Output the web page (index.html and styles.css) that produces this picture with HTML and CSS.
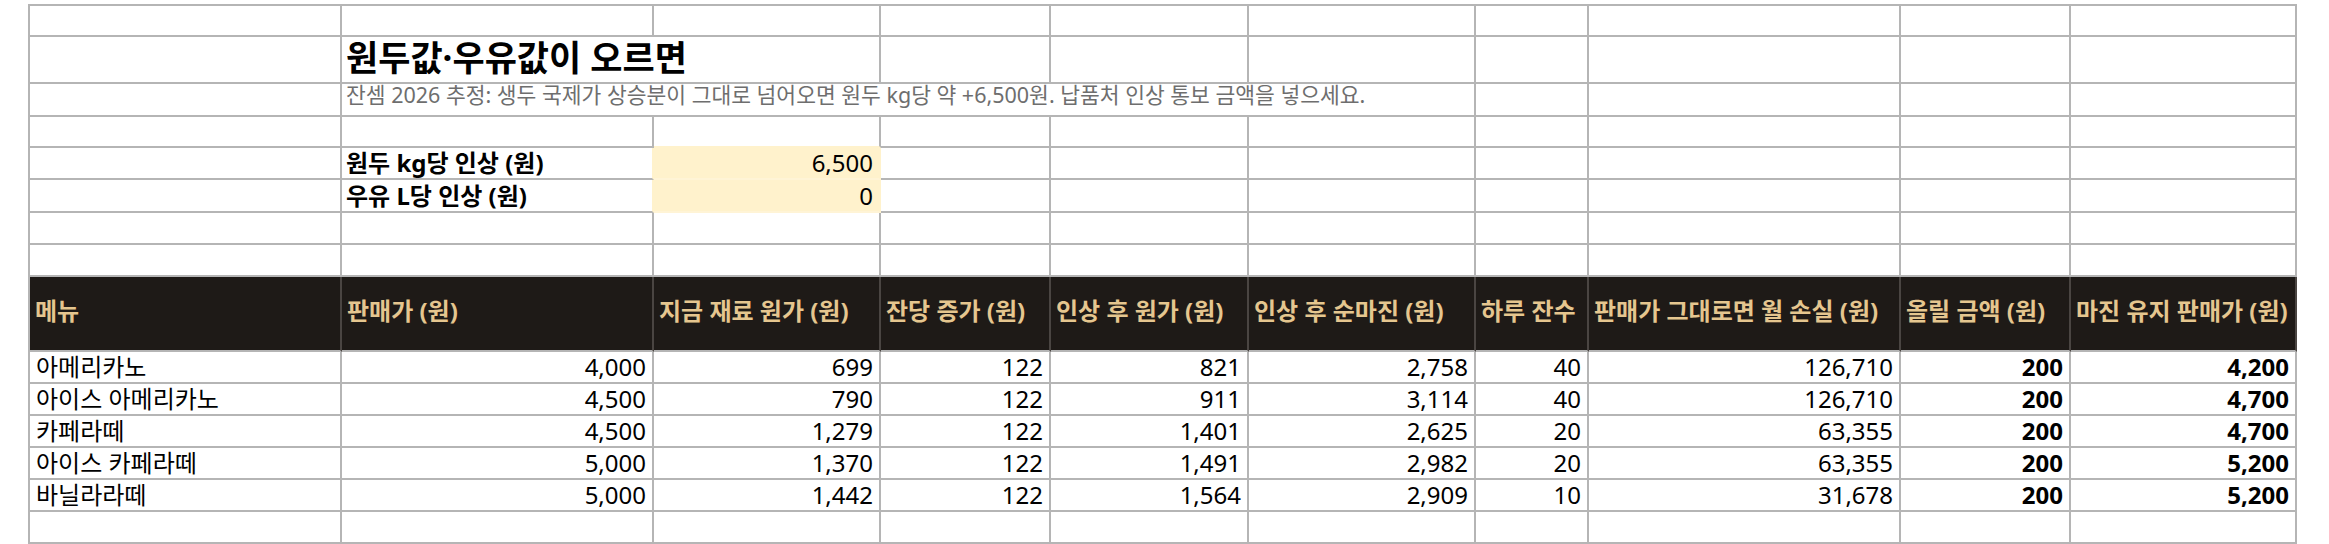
FILE: index.html
```html
<!DOCTYPE html>
<html lang="ko">
<head>
<meta charset="utf-8">
<title>원두값·우유값이 오르면</title>
<link rel="stylesheet" href="styles.css">
</head>
<body>
<div class="sheet">
  <!-- row 1 -->
  <div class="c"></div><div class="c"></div><div class="c"></div><div class="c"></div><div class="c"></div><div class="c"></div><div class="c"></div><div class="c"></div><div class="c"></div><div class="c"></div>
  <!-- row 2: title -->
  <div class="c"></div>
  <div class="c title span2">원두값·우유값이 오르면</div>
  <div class="c"></div><div class="c"></div><div class="c"></div><div class="c"></div><div class="c"></div><div class="c"></div><div class="c"></div>
  <!-- row 3: subtitle -->
  <div class="c"></div>
  <div class="c sub span5">잔셈 2026 추정: 생두 국제가 상승분이 그대로 넘어오면 원두 kg당 약 +6,500원. 납품처 인상 통보 금액을 넣으세요.</div>
  <div class="c"></div><div class="c"></div><div class="c"></div><div class="c"></div>
  <!-- row 4 -->
  <div class="c"></div><div class="c"></div><div class="c above-input"></div><div class="c"></div><div class="c"></div><div class="c"></div><div class="c"></div><div class="c"></div><div class="c"></div><div class="c"></div>
  <!-- row 5 -->
  <div class="c"></div>
  <div class="c label before-input">원두 kg당 인상 (원)</div>
  <div class="c num input">6,500</div>
  <div class="c"></div><div class="c"></div><div class="c"></div><div class="c"></div><div class="c"></div><div class="c"></div><div class="c"></div>
  <!-- row 6 -->
  <div class="c"></div>
  <div class="c label before-input">우유 L당 인상 (원)</div>
  <div class="c num input">0</div>
  <div class="c"></div><div class="c"></div><div class="c"></div><div class="c"></div><div class="c"></div><div class="c"></div><div class="c"></div>
  <!-- row 7 -->
  <div class="c"></div><div class="c"></div><div class="c"></div><div class="c"></div><div class="c"></div><div class="c"></div><div class="c"></div><div class="c"></div><div class="c"></div><div class="c"></div>
  <!-- row 8 -->
  <div class="c"></div><div class="c"></div><div class="c"></div><div class="c"></div><div class="c"></div><div class="c"></div><div class="c"></div><div class="c"></div><div class="c"></div><div class="c"></div>
  <!-- header -->
  <div class="c head">메뉴</div>
  <div class="c head">판매가 (원)</div>
  <div class="c head">지금 재료 원가 (원)</div>
  <div class="c head">잔당 증가 (원)</div>
  <div class="c head">인상 후 원가 (원)</div>
  <div class="c head">인상 후 순마진 (원)</div>
  <div class="c head">하루 잔수</div>
  <div class="c head">판매가 그대로면 월 손실 (원)</div>
  <div class="c head">올릴 금액 (원)</div>
  <div class="c head">마진 유지 판매가 (원)</div>
  <!-- data -->
  <div class="c">아메리카노</div><div class="c num">4,000</div><div class="c num">699</div><div class="c num">122</div><div class="c num">821</div><div class="c num">2,758</div><div class="c num">40</div><div class="c num">126,710</div><div class="c num b">200</div><div class="c num b">4,200</div>
  <div class="c">아이스 아메리카노</div><div class="c num">4,500</div><div class="c num">790</div><div class="c num">122</div><div class="c num">911</div><div class="c num">3,114</div><div class="c num">40</div><div class="c num">126,710</div><div class="c num b">200</div><div class="c num b">4,700</div>
  <div class="c">카페라떼</div><div class="c num">4,500</div><div class="c num">1,279</div><div class="c num">122</div><div class="c num">1,401</div><div class="c num">2,625</div><div class="c num">20</div><div class="c num">63,355</div><div class="c num b">200</div><div class="c num b">4,700</div>
  <div class="c">아이스 카페라떼</div><div class="c num">5,000</div><div class="c num">1,370</div><div class="c num">122</div><div class="c num">1,491</div><div class="c num">2,982</div><div class="c num">20</div><div class="c num">63,355</div><div class="c num b">200</div><div class="c num b">5,200</div>
  <div class="c">바닐라라떼</div><div class="c num">5,000</div><div class="c num">1,442</div><div class="c num">122</div><div class="c num">1,564</div><div class="c num">2,909</div><div class="c num">10</div><div class="c num">31,678</div><div class="c num b">200</div><div class="c num b">5,200</div>
  <!-- empty -->
  <div class="c"></div><div class="c"></div><div class="c"></div><div class="c"></div><div class="c"></div><div class="c"></div><div class="c"></div><div class="c"></div><div class="c"></div><div class="c"></div>
</div>
</body>
</html>
```

FILE: styles.css
```css
html, body {
  margin: 0;
  padding: 0;
  background: #ffffff;
}

body {
  padding: 4px 0 0 28px;
  font-family: "Noto Sans", "Noto Sans CJK KR", sans-serif;
  font-size: 24px;
  color: #000000;
}

.sheet {
  display: grid;
  grid-template-columns: 312px 312px 227px 170px 198px 227px 113px 312px 170px 226px;
  grid-template-rows: 31px 47px 33px 31px 32px 33px 32px 32px 75px 32px 32px 32px 32px 32px 32px;
  width: max-content;
  border-top: 2px solid #b5b5b5;
  border-left: 2px solid #b5b5b5;
}

.c {
  box-sizing: border-box;
  border-right: 2px solid #b5b5b5;
  border-bottom: 2px solid #b5b5b5;
  padding: 0 6px;
  display: flex;
  align-items: center;
  white-space: nowrap;
  line-height: 28px;
  min-width: 0;
}

.span2 { grid-column: span 2; }
.span5 { grid-column: span 5; }

.title {
  font-size: 35px;
  line-height: 42px;
  font-weight: 700;
  align-items: flex-start;
  padding-left: 4px;
}

.sub {
  font-size: 21.5px;
  line-height: 22px;
  color: #6e6e6e;
  align-items: flex-start;
  padding-left: 4px;
}

.label {
  font-weight: 700;
  padding-left: 4px;
}

.num {
  justify-content: flex-end;
}

.b {
  font-weight: 700;
}

.input {
  background: #fff2cc;
  border-right-color: #fff2cc;
  border-bottom-color: #fff4d6;
}

.above-input {
  border-bottom-color: #fff2cc;
}

.before-input {
  border-right-color: #fff2cc;
}

.head {
  background: #1e1a17;
  color: #e5c68f;
  font-weight: 700;
  border-right-color: #4a4542;
  padding-left: 5px;
  padding-bottom: 6px;
}
```
